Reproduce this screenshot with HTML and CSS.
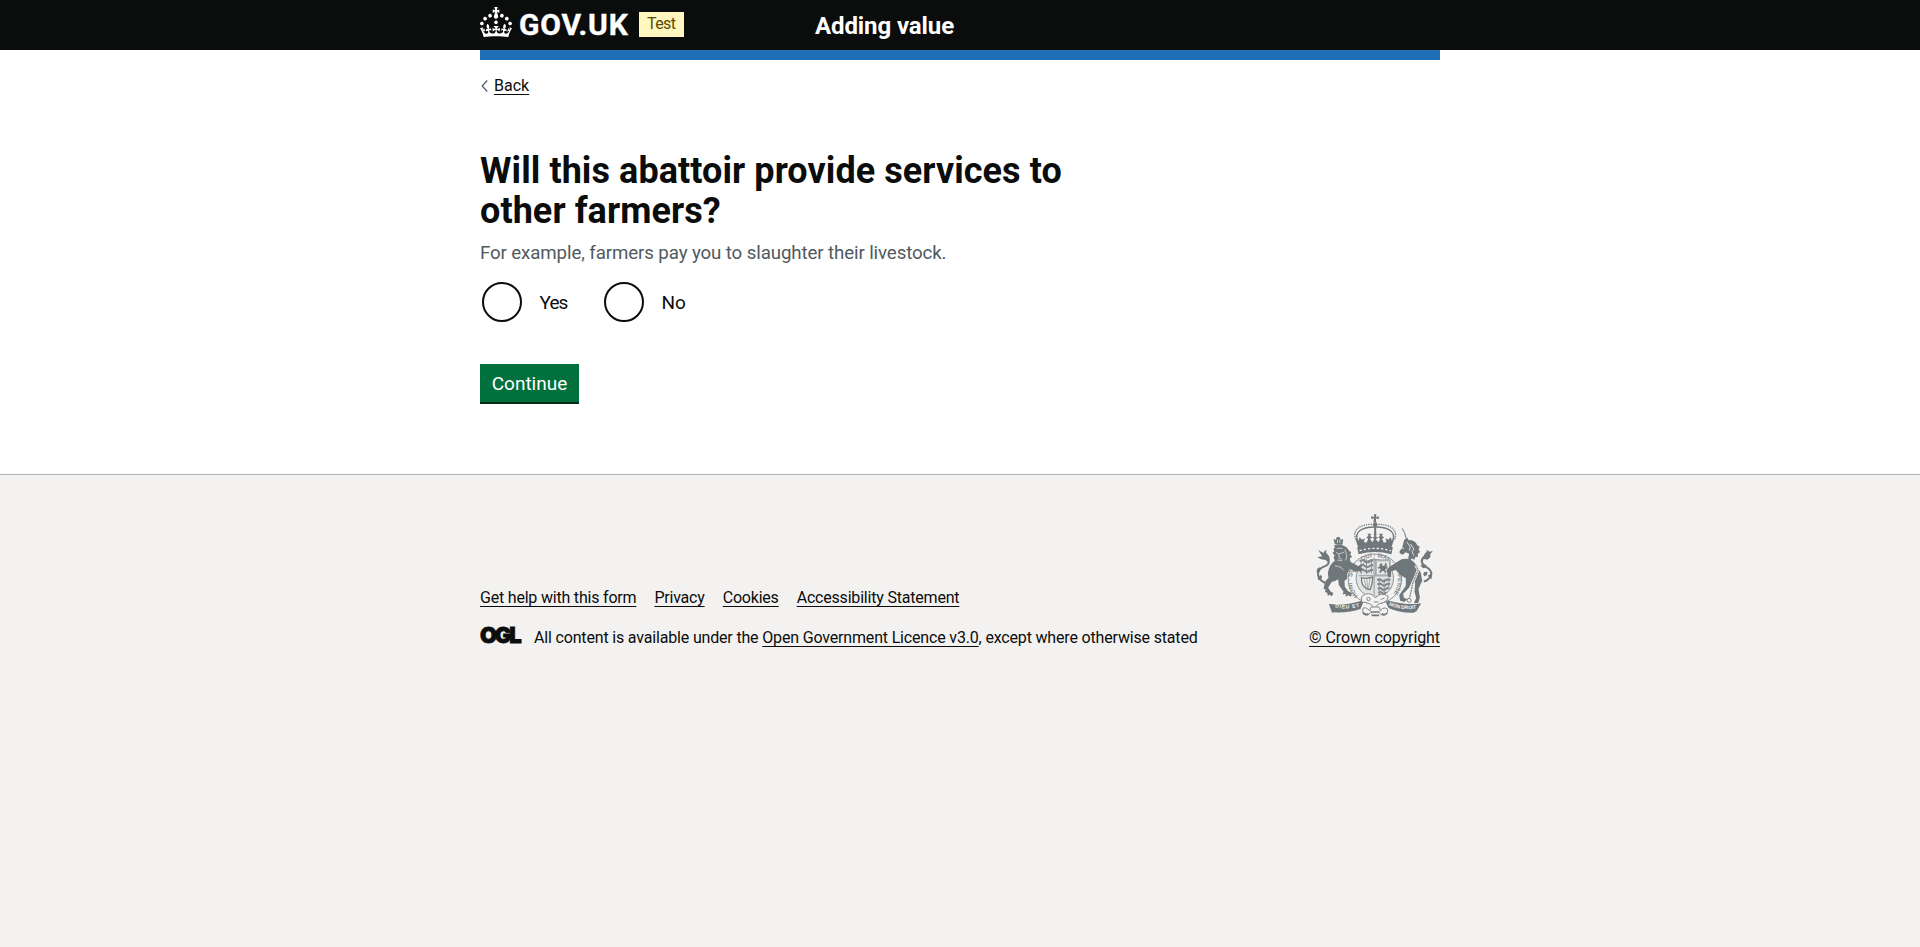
FILE: index.html
```html
<!DOCTYPE html>
<html lang="en">
<head>
<meta charset="utf-8">
<title>Will this abattoir provide services to other farmers?</title>
<link rel="stylesheet" href="styles.css">
</head>
<body>
<header class="header">
  <div class="container header-row">
    <a class="brand" href="#">
      <svg class="crown" viewBox="0 0 32 30" width="32" height="30" aria-hidden="true"><path fill="currentColor" d="M22.6 10.4c-1 .4-2-.1-2.4-1-.4-.9.1-2 1-2.4.9-.4 2 .1 2.4 1s-.1 2-1 2.4m-5.9 6.7c-.9.4-2-.1-2.4-1-.4-.9.1-2 1-2.4.9-.4 2 .1 2.4 1s-.1 2-1 2.4m10.8-3.7c-1 .4-2-.1-2.4-1-.4-.9.1-2 1-2.4.9-.4 2 .1 2.4 1s0 2-1 2.4m3.3 4.8c-1 .4-2-.1-2.4-1-.4-.9.1-2 1-2.4.9-.4 2 .1 2.4 1s-.1 2-1 2.4M17 4.7l2.3 1.2V2.5l-2.3.7-.2-.2.9-3h-3.4l.9 3-.2.2c-.1.1-2.3-.7-2.3-.7v3.4L15 4.7c.1.1.1.2.2.2l-1.3 4c-.1.2-.1.4-.1.6 0 1.1.8 2 1.9 2.2h.7c1-.2 1.9-1.1 1.9-2.1 0-.2 0-.4-.1-.6l-1.3-4c-.1-.2 0-.2.1-.3m-7.6 5.7c.9.4 2-.1 2.4-1 .4-.9-.1-2-1-2.4-.9-.4-2 .1-2.4 1s0 2 1 2.4m-5 3c.9.4 2-.1 2.4-1 .4-.9-.1-2-1-2.4-.9-.4-2 .1-2.4 1s.1 2 1 2.4m-3.2 4.8c.9.4 2-.1 2.4-1 .4-.9-.1-2-1-2.4-.9-.4-2 .1-2.4 1s0 2 1 2.4m14.8 11c4.4 0 8.6.3 12.3.8 1.1-4.5 2.4-7 3.7-8.8l-2.5-.9c.2 1.3.3 1.9 0 2.7-.4-.4-.8-1.1-1.1-2.3l-1.2 4c.7-.5 1.3-.8 2-.9-1.1 2.5-2.6 3.1-3.5 3-1.1-.2-1.7-1.2-1.5-2.1.3-1.2 1.5-1.5 2.1-.1 1.1-2.3-.8-3-2-2.3 1.9-1.9 2.1-3.5.6-5.6-2.1 1.6-2.1 3.2-1.2 5.5-1.2-1.4-3.2-.6-2.5 1.6.9-1.4 2.1-.5 1.9.8-.2 1.1-1.7 2.1-3.5 1.9-2.7-.2-2.9-2.1-2.9-3.6.7-.1 1.9.5 2.9 1.9l.4-4.3c-1.1 1.1-2.1 1.4-3.2 1.4.4-1.2 2.1-3 2.1-3h-5.4s1.7 1.9 2.1 3c-1.1 0-2.1-.2-3.2-1.4l.4 4.3c1-1.4 2.2-2 2.9-1.9-.1 1.5-.2 3.4-2.9 3.6-1.9.2-3.4-.8-3.5-1.9-.2-1.3 1-2.2 1.9-.8.7-2.3-1.2-3-2.5-1.6.9-2.2.9-3.9-1.2-5.5-1.5 2-1.3 3.7.6 5.6-1.2-.7-3.1 0-2 2.3.6-1.4 1.8-1.1 2.1.1.2.9-.3 1.9-1.5 2.1-.9.2-2.4-.5-3.5-3 .6 0 1.2.3 2 .9l-1.2-4c-.3 1.1-.7 1.9-1.1 2.3-.3-.8-.2-1.4 0-2.7l-2.9.9C1.3 23 2.6 25.5 3.7 30c3.7-.5 7.9-.8 12.3-.8"/></svg>
      <span class="wordmark">GOV.UK</span>
    </a>
    <span class="tag">Test</span>
    <a class="service" href="#">Adding value</a>
  </div>
</header>
<div class="page">
  <div class="container">
    <div class="bar"></div>
    <a class="back" href="#"><svg width="7" height="12" viewBox="0 0 7 12" aria-hidden="true"><path d="M6.2 .5 1.2 6l5 5.5" fill="none" stroke="#505a5f" stroke-width="1.2"/></svg><span class="link">Back</span></a>
    <main>
      <h1 class="title">Will this abattoir provide services to other farmers?</h1>
      <p class="hint">For example, farmers pay you to slaughter their livestock.</p>
      <div class="radios">
        <label class="radio"><span class="dot"></span><span class="yes">Yes</span></label>
        <label class="radio"><span class="dot"></span><span>No</span></label>
      </div>
      <button class="button" type="button">Continue</button>
    </main>
  </div>
</div>
<footer class="footer">
  <div class="container footer-row">
    <div class="meta">
      <nav class="links"><a class="link" href="#">Get help with this form</a><a class="link" href="#">Privacy</a><a class="link" href="#">Cookies</a><a class="link" href="#">Accessibility Statement</a></nav>
      <div class="licence"><span class="ogl">OGL</span><span>All content is available under the <a class="link" href="#">Open Government Licence v3.0</a>, except where otherwise stated</span></div>
    </div>
    <a class="copyright" href="#">
      <svg class="crest" viewBox="50 28 350 312" width="117" height="104" aria-hidden="true">
        <defs>
          <path id="garter" d="M176 274A69 69 0 1 1 276 274"/>
          <path id="left-motto" d="M107 308Q140 317 184 304"/>
          <path id="right-motto" d="M268 302Q308 319 354 311"/>
        </defs>
        <!-- garter and shield -->
        <ellipse cx="226" cy="223" rx="80" ry="75" fill="#f3f2f1" stroke="#8c9295" stroke-width="3"/>
        <ellipse cx="226" cy="221" rx="56" ry="57" fill="#e2e3e2" stroke="#8c9295" stroke-width="3"/>
        <text class="crest-garter"><textPath href="#garter" textLength="312">HONI · SOIT · QUI · MAL · Y · PENSE</textPath></text>
        <!-- imperial crown -->
        <g fill="#6f777b">
          <path d="M223 29h8l-2 8 9-2v8l-9-2 1 12h-8l1-12-8 2v-8l9 2z"/>
          <circle cx="227" cy="60" r="7"/>
          <path d="M173 128q53-18 107 0l-4 21q-49-14-99 0z"/>
          <path d="M176 128l-9-27 10 7 3-10 8 7 8-4-3 11 8 2 5-11-6-5 7-4-3-7h11l-3 7 6 4-6 5 6 10 7-10-7-4 7-4-3-8h10l-3 8 7 4-7 4 7 10 6-10-6-5 6-4-3-7h11l-3 7 7 4-6 5 5 11 8-2-3-11 8 4 8-7 3 10 7-5-8 25q-50-16-101 0z"/>
          <path d="M224 66h6v22h-6z"/>
        </g>
        <g fill="none" stroke="#6f777b">
          <path d="M175 108C163 82 186 68 224 67M279 108c12-26-11-40-49-41" stroke-width="4"/>
          <path d="M169 104C157 76 181 59 219 59M285 104c12-28-12-45-50-45" stroke-width="4" stroke-dasharray="4 3"/>
        </g>
        <path d="M180 138q47-14 94 0" fill="none" stroke="#f3f2f1" stroke-width="4" stroke-dasharray="7 6"/>
        <g fill="none" stroke="#818789" stroke-width="6">
          <path d="M181 170q8-6 15 0t15 0 9 0M181 184q8-6 15 0t15 0 9 0M181 198q8-6 15 0t15 0 9 0M233 227q7-6 13 0t13 0 13 0M234 240q7-6 13 0t13 0 11 0M235 253q7-6 12 0t12 0 8 0M237 265q7-5 11 0t12-2"/>
          <path d="M185 168v40M201 164v44M216 164v42M239 222v50M254 222v45M268 222v32" stroke-width="2.5"/>
        </g>
        <path d="M229 167h42v45h-42z" fill="#e8e8e6" stroke="#92989a" stroke-width="5"/>
        <path d="M229 167h42v45h-42z" fill="none" stroke="#f3f2f1" stroke-width="1"/>
        <path d="M240 180l5-5 4 5-1 5 8-3 1-8 5 3-1 9 4-1-4 8-5 1 5 8-5 5-1-7-7-2-4 6-6-1 5-7-1-6-5 3-3-5 6-1z" fill="#6f777b"/>
        <path d="M186 219q14 5 34-2-1 20-8 38-11 0-19-10-8-10-7-26z" fill="#f3f2f1" stroke="#777e81" stroke-width="4"/>
        <path d="M194 224l6 24M202 223l2 28M211 222l-4 30" stroke="#92989a" stroke-width="2.5"/>
        <path d="M224 158v119M178 213h94" stroke="#a9adae" stroke-width="4"/>
        <path d="M186 276q22-20 42 3 18-19 38-4 0 18-27 22l-15 14q-8-18-38-19z" fill="#f3f2f1" stroke="#858b8d" stroke-width="3"/>
        <circle cx="207" cy="283" r="5" fill="none" stroke="#6f777b" stroke-width="2.5"/>
        <path d="M223 292h14M243 285l12-5" stroke="#858b8d" stroke-width="3"/>
        <!-- lion -->
        <g fill="#6f777b">
          <path d="M106 119l-4-16 7 2 3-8h8l4 8 7-2-2 17z"/>
          <path d="M103 123q14-9 29 0 12 4 17 16l6 3-3 8 6 6-7 5 2 10 14 9 10 4 9-5-2 10 8 4-7 3 1 9-8-6-11 3-16-10-8 16q4 16-8 20l1 18 10 14 11 5-2 11-8-4-9 4 1-8-10 1 3-8-14-20-2-17q-9 6-20 8l-10 17 8 12 8 4-5 10-6-5-6 3-2-9-7-2 3-7-7-3 2-8q2-16 13-25l-2-13q3-26 21-38l-4-11 4-4-7-8 5-5-2-8 5-4z"/>
        </g>
        <path d="M78 235C48 222 49 194 75 185c18-7 15-18 1-24" fill="none" stroke="#6f777b" stroke-width="6"/>
        <path d="M77 165q-13 2-23-8l14-2-12-19 16 9q2-9 10-8-5 7 2 12 9 8 6 22z" fill="#6f777b"/>
        <path d="M60 187q-12 7-7 17 10-1 9-9zM65 211q-11 4-10 14 12 2 13-9z" fill="#6f777b"/>
        <path d="M112 132q9-4 18 0M110 143l8 5 15-5M118 148l1 12 8 4M136 135l6 17-3 15M128 168l-15-2M106 184q18 0 27 13M114 105v10M121 104v11" fill="none" stroke="#f3f2f1" stroke-width="2"/>
        <!-- unicorn -->
        <path d="M308 71l7 13 6 20" fill="none" stroke="#6f777b" stroke-width="3"/>
        <g fill="#6f777b">
          <path d="M314 105l10-6 3 7q20 0 26 15l8 6-4 7 5 8-7 5 0 10-7-1-4 10-6-5-7 8-5-8 3-14-11-4-8 7-9-4q-4-7 6-14l4-15z"/>
          <path d="M306 164q25-6 39 10 10 13 19 30l4 24-11 25 4 26-5 16-13 1 7-16-5-19 2-25-7-10-12 24-17 17 2 12 10 4-8 9-13-4-3-16 20-29 0-22-18-11-12-14-14 4-1 18-8-1-5-22 9-9z"/>
        </g>
        <path d="M373 231c27-10 28-31 10-42-20-12-21-24-7-34" fill="none" stroke="#6f777b" stroke-width="6"/>
        <path d="M371 162q2-16 11-21l-1-6 9 6 10-2-8 10q4 11-9 16zM363 183q8-8 18-1-2 9-10 9zM371 208q3-9 13-6 0 10-9 13zM384 213l14-7-2 18z" fill="#6f777b"/>
        <path d="M333 118l10 15-5 8 5 12M308 129l6 3M322 112l10 14-2 12" fill="none" stroke="#f3f2f1" stroke-width="2.5"/>
        <path d="M348 181l8 15-7 17-9 21-4 21-6 26" fill="none" stroke="#f3f2f1" stroke-width="8"/>
        <path d="M348 181l8 15-7 17-9 21-4 21-6 26" fill="none" stroke="#858b8d" stroke-width="4" stroke-dasharray="6 2"/>
        <circle cx="329" cy="287" r="6" fill="none" stroke="#777e81" stroke-width="3"/>
        <!-- motto ribbon -->
        <g fill="#6f777b">
          <path d="M88 298l12 1q36 4 84-10l7 5-8 19q-32 12-79 10l-6 2z"/>
          <path d="M259 292l9-4q45 12 82 10l15-2-14 24-9 4q-43 1-75-14z"/>
        </g>
        <path d="M190 311q8-5 15 2l9 8h25l9-9q10-5 16 1 3 16-12 19-11-1-13-9l-26 1q-6 11-17 7-9-7-6-20zM210 318l5-11h23l6 11" fill="#f3f2f1" stroke="#858b8d" stroke-width="3"/>
        <path d="M190 324q7 8 17 3M247 327q8 6 16-2M216 332h23" stroke="#6f777b" stroke-width="5" fill="none"/>
        <text class="crest-motto"><textPath href="#left-motto" textLength="74">DIEU ET</textPath></text>
        <text class="crest-motto"><textPath href="#right-motto" textLength="84">MON DROIT</textPath></text>
      </svg>
      <span class="link">© Crown copyright</span>
    </a>
  </div>
</footer>
</body>
</html>
```
FILE: styles.css
```css
body {
  margin: 0;
  background: #f3f2f1;
  color: #0b0c0c;
  font-family: Roboto, "Liberation Sans", sans-serif;
  font-size: 16px;
  line-height: 20px;
}
.container { width: 960px; margin: 0 auto; }
.link {
  color: #0b0c0c;
  text-decoration: underline;
  text-decoration-thickness: 1px;
  text-underline-offset: 3px;
}

.header { background: #0b0c0c; height: 50px; color: #fff; }
.header-row { display: flex; align-items: flex-start; }
.brand { display: flex; gap: 7px; padding-top: 7px; color: #fff; text-decoration: none; }
.crown { display: block; }
.wordmark {
  width: 112px;
  font-size: 30px;
  font-weight: 700;
  line-height: 36px;
  letter-spacing: 0.8px;
  -webkit-text-stroke: 0.4px #fff;
}
.tag {
  box-sizing: border-box;
  width: 45px;
  height: 25px;
  margin: 12px 0 0 8px;
  padding-left: 8px;
  background: #fff7bf;
  color: #594d00;
  line-height: 24px;
  letter-spacing: -0.6px;
}
.service {
  margin: 11px 0 0 131px;
  color: #fff;
  font-size: 24px;
  font-weight: 700;
  line-height: 30px;
  letter-spacing: -0.1px;
  text-decoration: none;
}

.page { background: #fff; height: 424px; }
.bar { height: 10px; background: #1d70b8; }
.back {
  display: inline-flex;
  align-items: center;
  gap: 6px;
  margin-top: 16px;
  padding-left: 1px;
  text-decoration: none;
}
.title {
  width: 640px;
  margin: 54px 0 0;
  font-size: 36px;
  font-weight: 700;
  line-height: 40px;
  letter-spacing: 0.07px;
}
.hint {
  margin: 10px 0 16px;
  color: #505a5f;
  font-size: 18.7px;
  line-height: 25px;
  letter-spacing: -0.11px;
}
.radios { display: flex; gap: 36px; padding-left: 2px; }
.radio { display: flex; align-items: center; gap: 17.5px; font-size: 19px; line-height: 25px; }
.yes { width: 28.5px; letter-spacing: -0.9px; }
.dot {
  box-sizing: border-box;
  width: 40px;
  height: 40px;
  border: 2px solid #0b0c0c;
  border-radius: 50%;
}
.button {
  display: block;
  width: 99px;
  height: 38px;
  margin: 42px 0 0;
  padding: 0;
  border: 0;
  background: #00703c;
  box-shadow: 0 2px 0 #002d18;
  color: #fff;
  font: 19px/40px Roboto, "Liberation Sans", sans-serif;
}

.footer { border-top: 1px solid #b1b4b6; padding-top: 39px; }
.footer-row { display: flex; justify-content: space-between; align-items: flex-end; }
.links { display: flex; gap: 18px; margin-bottom: 20px; letter-spacing: -0.2px; }
.licence { display: flex; gap: 13px; letter-spacing: -0.17px; }
.ogl {
  width: 41px;
  font-family: Inter, Roboto, sans-serif;
  font-size: 22px;
  font-weight: 900;
  line-height: 15px;
  letter-spacing: -2.2px;
  -webkit-text-stroke: 0.8px #0b0c0c;
}
.copyright {
  display: flex;
  flex-direction: column;
  align-items: flex-end;
  letter-spacing: -0.09px;
  text-decoration: none;
}
.crest { display: block; margin: 0 7px 10px 0; }
.crest-garter { font: 700 18px "Liberation Sans", sans-serif; fill: #858b8d; letter-spacing: 0; }
.crest-motto { font: 700 15px "Liberation Sans", sans-serif; fill: #f3f2f1; letter-spacing: 0; }
```
